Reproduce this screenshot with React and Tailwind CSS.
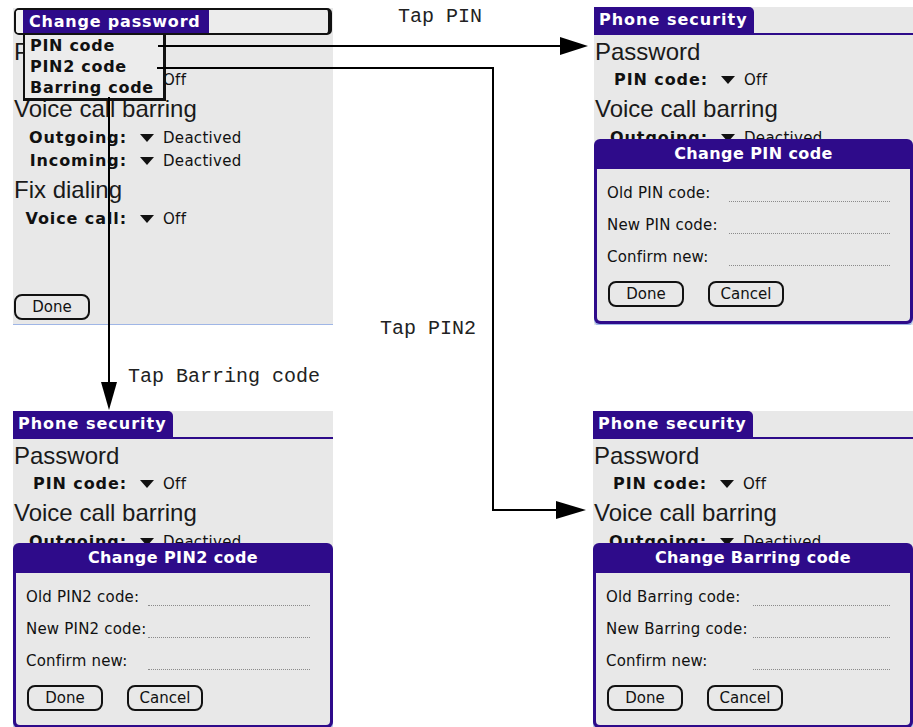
import React from "react";

function Tri() {
  return (
    <svg width="14" height="8" viewBox="0 0 14 8" className="shrink-0">
      <polygon points="0,0 14,0 7,8" fill="#111" />
    </svg>
  );
}

function BigRow({ h, children }) {
  return (
    <div className={`flex items-center pl-[1px] ${h}`}>
      <span className="font-['Liberation_Sans',sans-serif] text-[24px] leading-none text-[#1a1a1a] whitespace-nowrap">
        {children}
      </span>
    </div>
  );
}

function Setting({ h, label, value }) {
  return (
    <div className={`flex items-center ${h}`}>
      <span className="w-[114px] shrink-0 text-right font-['DejaVu_Sans',sans-serif] font-bold text-[16px] tracking-[0.9px] leading-none text-[#111] whitespace-nowrap">
        {label}
      </span>
      <span className="ml-[13px] flex items-center">
        <Tri />
      </span>
      <span className="ml-[9px] font-['DejaVu_Sans',sans-serif] text-[15px] tracking-[0.3px] leading-none text-[#111] whitespace-nowrap">
        {value}
      </span>
    </div>
  );
}

function SecurityList({ full }) {
  return (
    <div className="flex flex-col">
      <BigRow h="h-[34px]">Password</BigRow>
      <Setting h="h-[22px]" label="PIN code:" value="Off" />
      <BigRow h="h-[36px]">Voice call barring</BigRow>
      <Setting h="h-[22px]" label="Outgoing:" value="Deactived" />
      {full && (
        <>
          <Setting h="h-[24px]" label="Incoming:" value="Deactived" />
          <BigRow h="h-[34px]">Fix dialing</BigRow>
          <Setting h="h-[24px]" label="Voice call:" value="Off" />
        </>
      )}
    </div>
  );
}

function Tab() {
  return (
    <div className="flex flex-col">
      <div className="flex h-[26px]">
        <div className="bg-[#2e0b8a] rounded-tr-[5px] pl-[5px] pr-[6px] flex items-center text-white font-['DejaVu_Sans',sans-serif] font-bold text-[16px] tracking-[1px] leading-none whitespace-nowrap">
          Phone security
        </div>
      </div>
      <div className="h-[2px] bg-[#2e0b8a]" />
    </div>
  );
}

function PalmButton({ children }) {
  return (
    <div className="w-[76px] h-[26px] border-2 border-[#111] rounded-[8px] flex items-center justify-center font-['DejaVu_Sans',sans-serif] text-[15px] leading-none text-[#111]">
      {children}
    </div>
  );
}

function Dialog({ title, labels, labelW, top }) {
  return (
    <div className={`absolute left-0 right-0 h-[185px] rounded-[6px] bg-[#2e0b8a] px-[3px] pb-[3px] flex flex-col shadow-[0_2px_0_#9fb6e6] ${top}`}>
      <div className="h-[30px] flex items-center justify-center text-white font-['DejaVu_Sans',sans-serif] font-bold text-[16px] tracking-[0.4px] leading-none whitespace-nowrap">
        {title}
      </div>
      <div className="flex-1 bg-[#e8e8e8] rounded-b-[4px] pl-[10px] pt-[8px] flex flex-col">
        {labels.map((l) => (
          <div key={l} className="h-[32px] flex items-center">
            <span className={`shrink-0 font-['DejaVu_Sans',sans-serif] text-[15px] tracking-[0.2px] leading-none text-[#111] whitespace-nowrap ${labelW}`}>
              {l}
            </span>
            <div className="flex-1 mr-[20px] mt-[16px] border-b border-dotted border-[#8a8a8a]" />
          </div>
        ))}
        <div className="mt-[8px] flex gap-[24px] pl-[1px]">
          <PalmButton>Done</PalmButton>
          <PalmButton>Cancel</PalmButton>
        </div>
      </div>
    </div>
  );
}

function ScreenMenu() {
  return (
    <div className="relative w-[320px] h-[317px] bg-[#e8e8e8] border-b border-[#9fb6e6] flex flex-col">
      <div className="h-[27px] ml-[1px] mr-[1px] border-2 border-r-[4px] border-[#111] rounded-[5px] bg-[#ececec] flex overflow-hidden">
        <div className="w-[7px] bg-[#f4f4f4]" />
        <div className="w-[186px] bg-[#2e0b8a] flex items-center pl-[6px] text-white font-['DejaVu_Sans',sans-serif] font-bold text-[16px] tracking-[0.8px] leading-none whitespace-nowrap">
          Change password
        </div>
      </div>
      <SecurityList full />
      <div className="flex-1" />
      <div className="pl-[1px] pb-[4px]">
        <PalmButton>Done</PalmButton>
      </div>
      <div className="absolute left-[10px] top-[25px] w-[143px] h-[68px] bg-[#ececec] border-2 border-r-[3px] border-b-[3px] border-[#111] pt-[1px] pl-[5px] flex flex-col">
        {["PIN code", "PIN2 code", "Barring code"].map((t) => (
          <div key={t} className="h-[21px] flex items-center font-['DejaVu_Sans',sans-serif] font-bold text-[16px] tracking-[0.7px] leading-none text-[#111] whitespace-nowrap">
            {t}
          </div>
        ))}
      </div>
    </div>
  );
}

function ScreenDialog({ title, labels, labelW, width }) {
  return (
    <div className={`relative h-[318px] bg-[#e8e8e8] overflow-hidden flex flex-col ${width}`}>
      <Tab />
      <SecurityList />
      <Dialog title={title} labels={labels} labelW={labelW} top="top-[132px]" />
    </div>
  );
}

export default function App() {
  return (
    <div className="relative w-[913px] h-[727px] bg-white overflow-hidden">
      <div className="absolute left-[13px] top-[8px]">
        <ScreenMenu />
      </div>
      <div className="absolute left-[594px] top-[7px]">
        <ScreenDialog
          width="w-[319px]"
          title="Change PIN code"
          labels={["Old PIN code:", "New PIN code:", "Confirm new:"]}
          labelW="w-[122px]"
        />
      </div>
      <div className="absolute left-[13px] top-[411px]">
        <ScreenDialog
          width="w-[320px]"
          title="Change PIN2 code"
          labels={["Old PIN2 code:", "New PIN2 code:", "Confirm new:"]}
          labelW="w-[122px]"
        />
      </div>
      <div className="absolute left-[593px] top-[411px]">
        <ScreenDialog
          width="w-[320px]"
          title="Change Barring code"
          labels={["Old Barring code:", "New Barring code:", "Confirm new:"]}
          labelW="w-[147px]"
        />
      </div>

      <svg className="absolute inset-0 pointer-events-none" width="913" height="727" viewBox="0 0 913 727">
        <g stroke="#000" strokeWidth="2" fill="none">
          <line x1="158" y1="46" x2="562" y2="46" />
          <polyline points="157,68 493,68 493,510 558,510" />
          <line x1="109" y1="97" x2="109" y2="384" />
        </g>
        <g fill="#000">
          <polygon points="560,37 588,46 560,55" />
          <polygon points="556,501 586,510 556,519" />
          <polygon points="101,382 109,410 117,382" />
        </g>
      </svg>

      <div className="absolute left-[398px] top-[6px] font-['Liberation_Mono',monospace] text-[20px] leading-[22px] text-[#222] whitespace-nowrap">
        Tap PIN
      </div>
      <div className="absolute left-[380px] top-[318px] font-['Liberation_Mono',monospace] text-[20px] leading-[22px] text-[#222] whitespace-nowrap">
        Tap PIN2
      </div>
      <div className="absolute left-[128px] top-[366px] font-['Liberation_Mono',monospace] text-[20px] leading-[22px] text-[#222] whitespace-nowrap">
        Tap Barring code
      </div>
    </div>
  );
}
